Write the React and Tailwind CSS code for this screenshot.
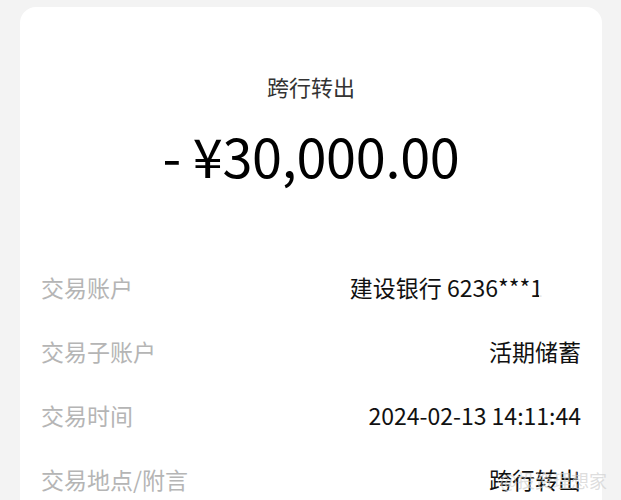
import React from 'react';

const rows = [
  { label: '交易账户', value: '建设银行 6236***1', blur: true },
  { label: '交易子账户', value: '活期储蓄' },
  { label: '交易时间', value: '2024-02-13 14:11:44' },
  { label: '交易地点/附言', value: '跨行转出', mark: true },
];

const App = () => {
  return (
    <div
      className="w-[621px] h-[500px] overflow-hidden bg-[#f3f3f3] px-[20px] pt-[7px]"
      style={{ fontFamily: '"Noto Sans CJK SC", "Noto Sans", sans-serif' }}
    >
      <div className="w-[582px] h-[520px] bg-white rounded-[16px] flex flex-col">
        {/* Header */}
        <div className="pt-[64px] text-center text-[22px] leading-[30px] text-[#333]">跨行转出</div>
        <div className="mt-[22px] text-center text-[54px] leading-[64px] text-black tracking-[-0.3px]">
          - ¥30,000.00
        </div>

        {/* Detail rows */}
        <div className="mt-[84px] flex flex-col gap-[32px] px-[21px]">
          {rows.map(r => (
            <div key={r.label} className="relative flex items-center justify-between h-[32px] text-[23px]">
              <span className="text-[#b5b5b5]">{r.label}</span>
              <span className="text-[#111] relative">
                {r.value}
                {r.blur && <span className="inline-block w-[42px] h-[28px] align-middle bg-white/90 -ml-[4px]" />}
              </span>
              {r.mark && (
                <span className="absolute right-[-26px] top-[4px] text-[18px] text-[#d0d0d0]/70">@投资理想家</span>
              )}
            </div>
          ))}
        </div>
      </div>
    </div>
  );
};

export default App;
